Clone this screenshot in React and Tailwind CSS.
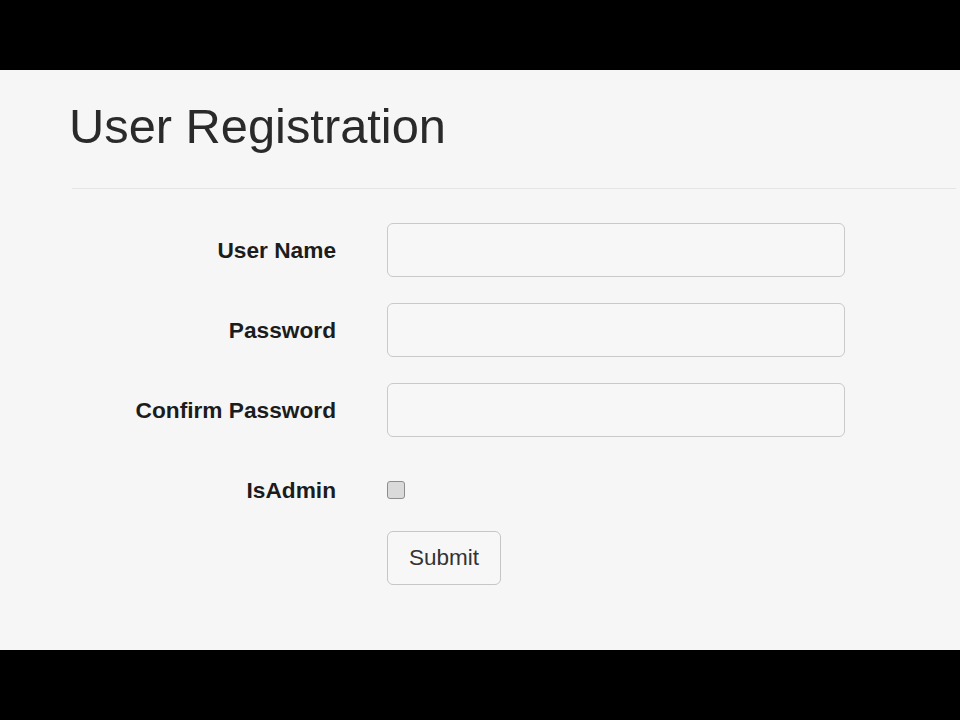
import React from "react";

function Row({ label, children }) {
  return (
    <div className="flex items-center ml-[69px]">
      <div className="w-[267px] text-right font-bold text-[22.7px] text-[#1c1c1c]">
        {label}
      </div>
      <div className="ml-[51px]">{children}</div>
    </div>
  );
}

function Field() {
  return <div className="w-[458px] h-[54px] rounded-[6px] border border-[#c9c9c9] bg-[#f8f7f7]" />;
}

export default function App() {
  return (
    <div className="w-[960px] h-[720px] flex flex-col bg-black" style={{ fontFamily: '"Liberation Sans", Arial, sans-serif' }}>
      <div className="h-[70px] bg-black" />
      <div className="h-[580px] bg-[#f7f6f6] pt-[32px]">
        <h1 className="ml-[69px] text-[48.8px] leading-none text-[#2a2a2a] font-normal">User Registration</h1>
        <div className="ml-[72px] mr-[4px] mt-[37px] h-px bg-[#e6e5e5]" />
        <div className="mt-[34px] flex flex-col">
          <div className="flex flex-col gap-[26px]">
            <Row label="User Name"><Field /></Row>
            <Row label="Password"><Field /></Row>
            <Row label="Confirm Password"><Field /></Row>
          </div>
          <div className="mt-[36px] h-[33px]">
            <Row label="IsAdmin">
              <div className="w-[18px] h-[18px] rounded-[3px] border border-[#8d8d8d] bg-[#dadada]" />
            </Row>
          </div>
          <div className="mt-[25px] ml-[387px]">
            <button className="w-[114px] h-[54px] rounded-[6px] border border-[#c6c6c6] bg-[#f8f7f7] text-[22.5px] text-[#333]">
              Submit
            </button>
          </div>
        </div>
      </div>
      <div className="flex-1 bg-black" />
    </div>
  );
}
